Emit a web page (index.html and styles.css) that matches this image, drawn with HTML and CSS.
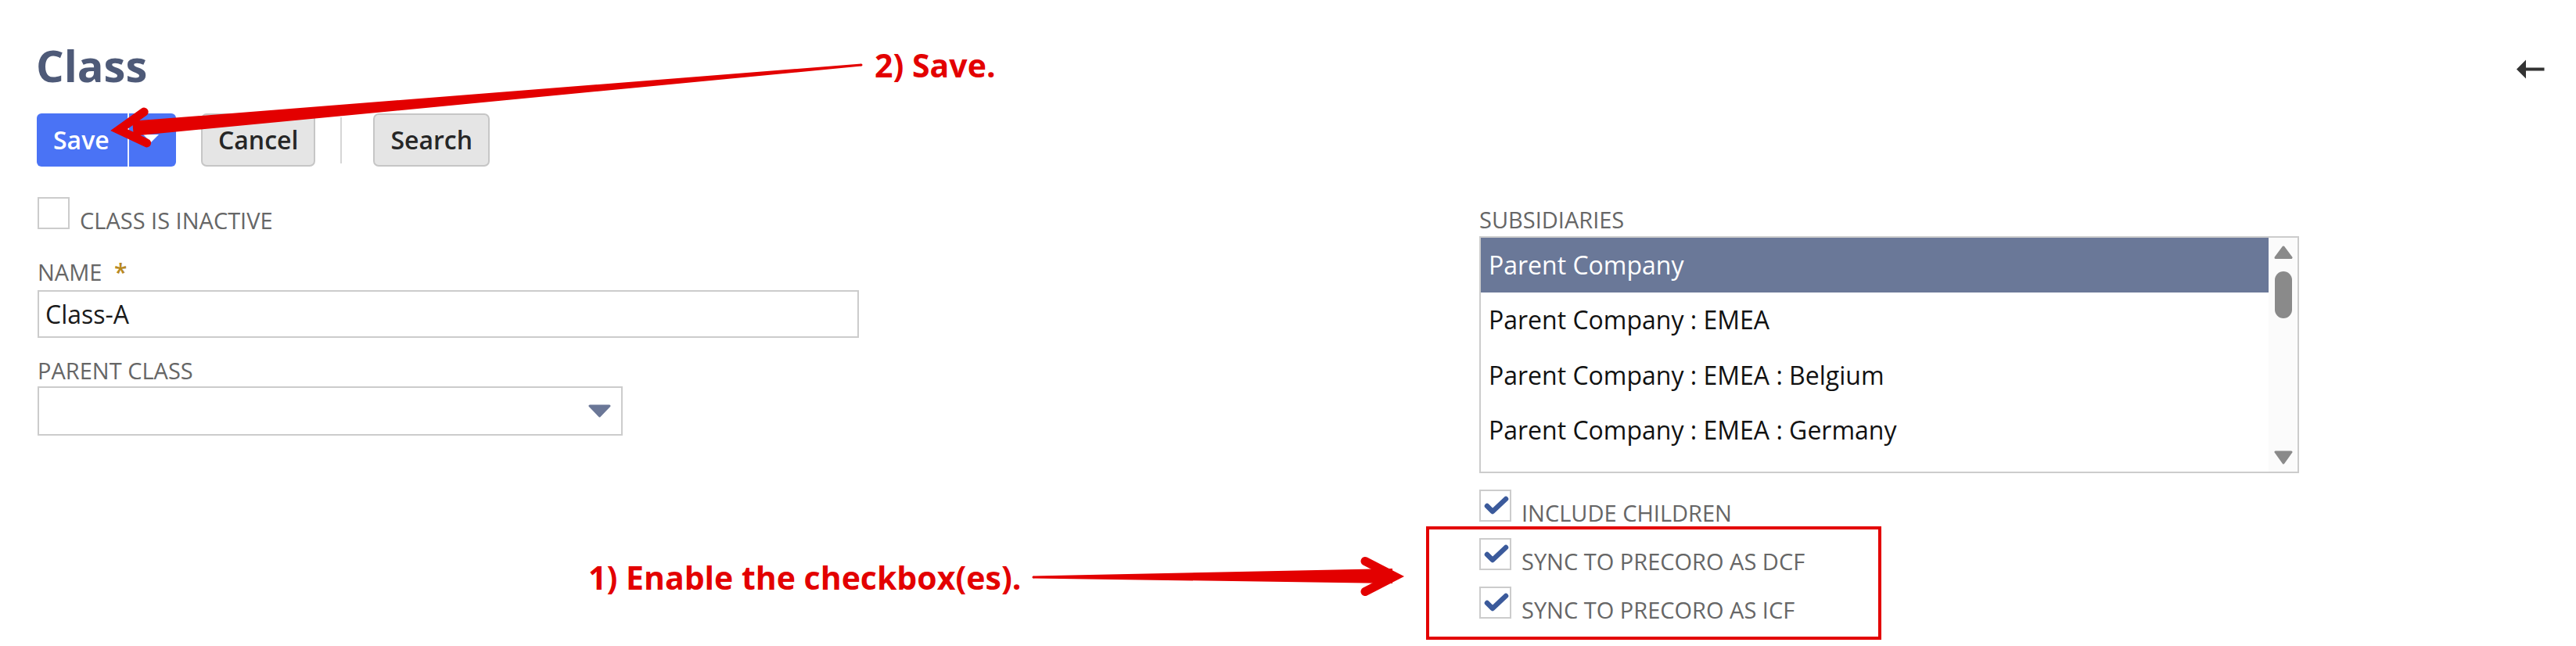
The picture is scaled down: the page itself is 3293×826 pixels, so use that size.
FILE: index.html
```html
<!DOCTYPE html>
<html lang="en">
<head>
<meta charset="utf-8">
<title>Class</title>
<link rel="stylesheet" href="styles.css">
</head>
<body>
<div class="page">
  <div class="title-row">
    <h1 class="title">Class</h1>
    <svg class="back" width="36" height="25" viewBox="0 0 36 25"><path d="M0 12.5 L12 0.5 L12 10.5 L35.5 10.5 L35.5 14.5 L12 14.5 L12 24.5 Z" fill="#333"/></svg>
  </div>

  <div class="toolbar">
    <div class="btn-primary">
      <span class="btn-primary-label">Save</span>
      <span class="btn-primary-menu"><svg width="20" height="10" viewBox="0 0 20 10"><path d="M0 0 H20 L10 10 Z" fill="#fff"/></svg></span>
    </div>
    <button class="btn btn-cancel">Cancel</button>
    <span class="tb-sep"></span>
    <button class="btn btn-search">Search</button>
  </div>

  <div class="form">
    <div class="col-left">
      <div class="check-row">
        <span class="cb"></span>
        <span class="lbl cb-label">CLASS IS INACTIVE</span>
      </div>
      <div class="field field-name">
        <div class="lbl">NAME <span class="req">*</span></div>
        <div class="text-input">Class-A</div>
      </div>
      <div class="field field-parent">
        <div class="lbl">PARENT CLASS</div>
        <div class="select">
          <svg width="29" height="17" viewBox="0 0 29 17"><path d="M2 2 H27 L14.5 15 Z" fill="#6b7797" stroke="#6b7797" stroke-width="3" stroke-linejoin="round"/></svg>
        </div>
      </div>
    </div>

    <div class="col-right">
      <div class="lbl sub-label">SUBSIDIARIES</div>
      <div class="listbox">
        <div class="list-items">
          <div class="li li-selected">Parent Company</div>
          <div class="li">Parent Company : EMEA</div>
          <div class="li">Parent Company : EMEA : Belgium</div>
          <div class="li">Parent Company : EMEA : Germany</div>
        </div>
        <div class="scrollbar">
          <svg class="sb-arrow" width="24" height="17" viewBox="0 0 24 17"><path d="M12 2 L22 15.5 H2 Z" fill="#8a8a8a" stroke="#8a8a8a" stroke-width="3" stroke-linejoin="round"/></svg>
          <span class="sb-thumb"></span>
          <span class="sb-space"></span>
          <svg class="sb-arrow" width="24" height="18" viewBox="0 0 24 18"><path d="M2 2 H22 L12 16 Z" fill="#8a8a8a" stroke="#8a8a8a" stroke-width="3" stroke-linejoin="round"/></svg>
        </div>
      </div>
      <div class="checks">
        <div class="check-row">
          <span class="cb"><svg width="37" height="37" viewBox="0 0 37 37"><path d="M8 19 L15 26 L32 10" fill="none" stroke="#3b5a9b" stroke-width="6.5" stroke-linecap="round" stroke-linejoin="round"/></svg></span>
          <span class="lbl cb-label">INCLUDE CHILDREN</span>
        </div>
        <div class="check-row">
          <span class="cb"><svg width="37" height="37" viewBox="0 0 37 37"><path d="M8 19 L15 26 L32 10" fill="none" stroke="#3b5a9b" stroke-width="6.5" stroke-linecap="round" stroke-linejoin="round"/></svg></span>
          <span class="lbl cb-label">SYNC TO PRECORO AS DCF</span>
        </div>
        <div class="check-row">
          <span class="cb"><svg width="37" height="37" viewBox="0 0 37 37"><path d="M8 19 L15 26 L32 10" fill="none" stroke="#3b5a9b" stroke-width="6.5" stroke-linecap="round" stroke-linejoin="round"/></svg></span>
          <span class="lbl cb-label">SYNC TO PRECORO AS ICF</span>
        </div>
      </div>
    </div>
  </div>
</div>

<svg class="overlay" width="3293" height="826" viewBox="0 0 3293 826">
  <!-- arrow to Save -->
  <polygon points="1100.9,81.5 169.2,154.8 170.8,173.8 1101.1,84.5" fill="#e30000"/>
  <circle cx="1101" cy="83" r="1.5" fill="#e30000"/>
  <polyline points="184.2,143.1 152,166 187.6,182.9" fill="none" stroke="#e30000" stroke-width="11" stroke-linecap="round" stroke-linejoin="miter"/>
  <text class="note" x="1118" y="99">2) Save.</text>

  <!-- arrow to checkboxes -->
  <polygon points="1321,736.5 1780,727 1780,746 1321,739.5" fill="#e30000"/>
  <circle cx="1321" cy="738" r="1.5" fill="#e30000"/>
  <polyline points="1745,717.5 1783,737 1745,756.5" fill="none" stroke="#e30000" stroke-width="11" stroke-linecap="round" stroke-linejoin="miter"/>
  <text class="note" x="752" y="754">1) Enable the checkbox(es).</text>

  <rect x="1825" y="675" width="578" height="141" fill="none" stroke="#e30000" stroke-width="4"/>
</svg>
</body>
</html>
```

FILE: styles.css
```css
html, body {
  margin: 0;
  padding: 0;
  background: #ffffff;
}

body {
  position: relative;
  width: 3293px;
  height: 826px;
  overflow: hidden;
  font-family: "Open Sans", "Liberation Sans", sans-serif;
}

.page {
  padding: 45px 40px 0 48px;
}

.title-row {
  display: flex;
  justify-content: space-between;
  align-items: flex-start;
}

.title {
  margin: 0 0 0 -2px;
  font-size: 56px;
  line-height: 76px;
  font-weight: 700;
  color: #4e5a78;
}

.back {
  display: block;
  margin-top: 31px;
}

/* toolbar */
.toolbar {
  display: flex;
  align-items: center;
  margin-top: 24px;
  height: 68px;
}

.btn-primary {
  display: flex;
  height: 68px;
  margin-left: -1px;
  background: #4a73f5;
  border-radius: 6px;
  color: #ffffff;
}

.btn-primary-label {
  width: 116px;
  box-sizing: border-box;
  padding-left: 21px;
  font-size: 32px;
  font-weight: 600;
  line-height: 68px;
}

.btn-primary-menu {
  width: 62px;
  box-sizing: border-box;
  border-left: 2px solid rgba(255, 255, 255, 0.9);
  display: flex;
  align-items: center;
  padding-left: 18px;
}

.btn-primary-menu svg {
  display: block;
  margin-top: -4px;
}

.btn {
  height: 68px;
  box-sizing: border-box;
  border: 2px solid #c6c6c6;
  border-radius: 7px;
  background: #e5e5e5;
  padding: 0 20px;
  font-family: "Open Sans", "Liberation Sans", sans-serif;
  font-size: 32px;
  font-weight: 600;
  line-height: 64px;
  color: #262626;
  margin: 0;
}

.btn-cancel {
  margin-left: 32px;
}

.tb-sep {
  width: 2px;
  height: 59px;
  background: #d6d6d6;
  margin-left: 32px;
}

.btn-search {
  margin-left: 40px;
}

/* form */
.form {
  display: grid;
  grid-template-columns: 1843px 1048px;
  margin-top: 39px;
}

.lbl {
  font-size: 29px;
  line-height: 34px;
  color: #666666;
  white-space: nowrap;
}

.check-row {
  display: flex;
  align-items: baseline;
  height: 41px;
}

.cb {
  display: block;
  width: 41px;
  height: 41px;
  box-sizing: border-box;
  border: 2px solid #cccccc;
  background: #ffffff;
  flex: none;
}

.cb svg {
  display: block;
}

.cb-label {
  margin-left: 13px;
}

.field-name {
  margin-top: 38px;
}

.field-parent {
  margin-top: 25px;
}

.req {
  font-size: 30px;
  font-weight: 600;
  color: #b8891f;
  margin-left: 8px;
}

.text-input {
  margin-top: 6px;
  width: 1050px;
  height: 61px;
  box-sizing: border-box;
  border: 2px solid #cccccc;
  padding-left: 8px;
  font-size: 32px;
  line-height: 57px;
  color: #1a1a1a;
}

.select {
  margin-top: 3px;
  width: 748px;
  height: 63px;
  box-sizing: border-box;
  border: 2px solid #cccccc;
  display: flex;
  justify-content: flex-end;
  align-items: center;
  padding-right: 13px;
}

.select svg {
  display: block;
}

/* right column */
.sub-label {
  margin-top: 12px;
}

.listbox {
  margin-top: 4px;
  height: 303px;
  box-sizing: border-box;
  border: 2px solid #cccccc;
  display: flex;
  overflow: hidden;
}

.list-items {
  flex: 1;
}

.li {
  height: 70.33px;
  line-height: 70.33px;
  padding-left: 10px;
  font-size: 32px;
  color: #111111;
  white-space: nowrap;
}

.li-selected {
  background: #6a7898;
  color: #ffffff;
}

.scrollbar {
  width: 37px;
  flex: none;
  background: #fbfbfb;
  display: flex;
  flex-direction: column;
  align-items: center;
  padding: 10px 0 9px;
  box-sizing: border-box;
}

.sb-arrow {
  display: block;
  flex: none;
}

.sb-thumb {
  display: block;
  width: 22px;
  height: 60px;
  margin-top: 16px;
  border-radius: 11px;
  background: #8a8a8a;
  flex: none;
}

.sb-space {
  flex: 1;
}

.checks {
  margin-top: 21px;
  display: flex;
  flex-direction: column;
  gap: 21px;
}

/* annotations */
.overlay {
  position: absolute;
  top: 0;
  left: 0;
  pointer-events: none;
}

.note {
  font-family: "Open Sans", "Liberation Sans", sans-serif;
  font-size: 41px;
  font-weight: 700;
  fill: #e30000;
}
```
